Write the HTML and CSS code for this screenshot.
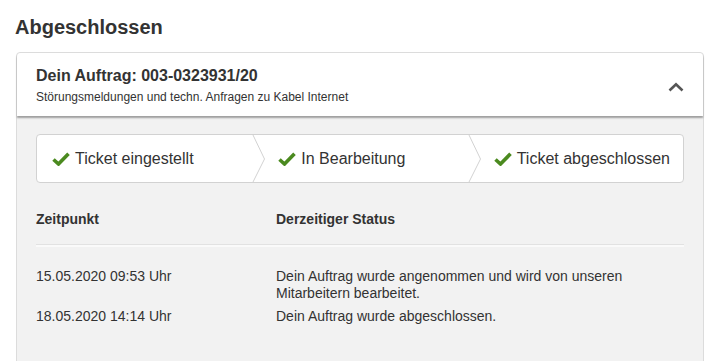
FILE: index.html
```html
<!DOCTYPE html>
<html lang="de">
<head>
  <meta charset="UTF-8" />
  <title>Abgeschlossen</title>
  <link rel="stylesheet" href="styles.css">
</head>
<body>
  <h1>Abgeschlossen</h1>

  <div class="auftrag">
    <div class="auftrag-kopf">
      <div>
        <h2>Dein Auftrag: 003-0323931/20</h2>
        <p class="kategorie">Störungsmeldungen und techn. Anfragen zu Kabel Internet</p>
      </div>
      <svg class="pfeil" viewBox="0 0 16 10" fill="none" stroke="currentColor" stroke-width="2.6">
        <polyline points="1.5,8.5 8,2.2 14.5,8.5"></polyline>
      </svg>
    </div>

    <div class="auftrag-inhalt">
      <div class="schritte">
        <div class="schritt">
          <svg class="haken" viewBox="0 0 18 14"><polyline points="1.5,7.5 6.5,12 16.5,1.8"></polyline></svg>
          <span>Ticket eingestellt</span>
        </div>
        <div class="schritt">
          <svg class="trenner" viewBox="0 0 14 49" preserveAspectRatio="none"><polyline points="0.5,0 12.5,25 0.5,49"></polyline></svg>
          <svg class="haken" viewBox="0 0 18 14"><polyline points="1.5,7.5 6.5,12 16.5,1.8"></polyline></svg>
          <span>In Bearbeitung</span>
        </div>
        <div class="schritt">
          <svg class="trenner" viewBox="0 0 14 49" preserveAspectRatio="none"><polyline points="0.5,0 12.5,25 0.5,49"></polyline></svg>
          <svg class="haken" viewBox="0 0 18 14"><polyline points="1.5,7.5 6.5,12 16.5,1.8"></polyline></svg>
          <span>Ticket abgeschlossen</span>
        </div>
      </div>

      <div class="verlauf">
        <div class="zeile kopfzeile">
          <div>Zeitpunkt</div>
          <div>Derzeitiger Status</div>
        </div>
        <div class="eintraege">
          <div class="zeile">
            <div>15.05.2020 09:53 Uhr</div>
            <div>Dein Auftrag wurde angenommen und wird von unseren Mitarbeitern bearbeitet.</div>
          </div>
          <div class="zeile">
            <div>18.05.2020 14:14 Uhr</div>
            <div>Dein Auftrag wurde abgeschlossen.</div>
          </div>
        </div>
      </div>
    </div>
  </div>
</body>
</html>
```

FILE: styles.css
```css
body {
  font-family: "Liberation Sans", Arial, sans-serif;
  margin: 0;
  padding: 16px 18px 0 15px;
  background: #fff;
  color: #333;
}

h1 {
  font-size: 20px;
  line-height: 23px;
  margin: 0 0 13px 0;
  color: #333;
}

.auftrag {
  margin-left: 1px;
  border: 1px solid #dcdcdc;
  border-radius: 4px 4px 0 0;
  background: #f2f2f2;
}

.auftrag-kopf {
  display: flex;
  align-items: center;
  justify-content: space-between;
  background: white;
  padding: 14px 19px 12px 19px;
  border-radius: 4px 4px 0 0;
  box-shadow: 0 2px 2px rgba(0, 0, 0, 0.35);
  position: relative;
}

.auftrag-kopf h2 {
  font-size: 16px;
  line-height: 18px;
  margin: 0;
  color: #333;
}

.kategorie {
  font-size: 12px;
  line-height: 14px;
  margin: 5px 0 0 0;
}

.pfeil {
  width: 16px;
  height: 10px;
  color: #555;
  margin-top: 3px;
}

.auftrag-inhalt {
  padding: 18px 19px 40px 19px;
}

.schritte {
  display: grid;
  grid-template-columns: repeat(3, 1fr);
  height: 49px;
  box-sizing: border-box;
  background: white;
  border: 1px solid #d2d2d2;
  border-radius: 4px;
}

.schritt {
  position: relative;
  display: flex;
  align-items: center;
  gap: 5px;
  padding-left: 15px;
  font-size: 16px;
}

.schritt + .schritt {
  padding-left: 26px;
}

.trenner {
  position: absolute;
  left: 0;
  top: -1px;
  width: 14px;
  height: 49px;
  fill: none;
  stroke: #d2d2d2;
  stroke-width: 1;
}

.haken {
  width: 18px;
  height: 14px;
  fill: none;
  stroke: #4b8a1f;
  stroke-width: 3.6;
}

.verlauf {
  margin-top: 28px;
  font-size: 14px;
  line-height: 17px;
}

.zeile {
  display: grid;
  grid-template-columns: 240px 1fr;
  padding-right: 40px;
}

.kopfzeile {
  font-weight: 700;
  padding-bottom: 16px;
  border-bottom: 1px solid #e2e2e2;
  box-shadow: 0 2px 0 #fafafa;
}

.eintraege {
  display: flex;
  flex-direction: column;
  gap: 6px;
  padding-top: 23px;
}
```
